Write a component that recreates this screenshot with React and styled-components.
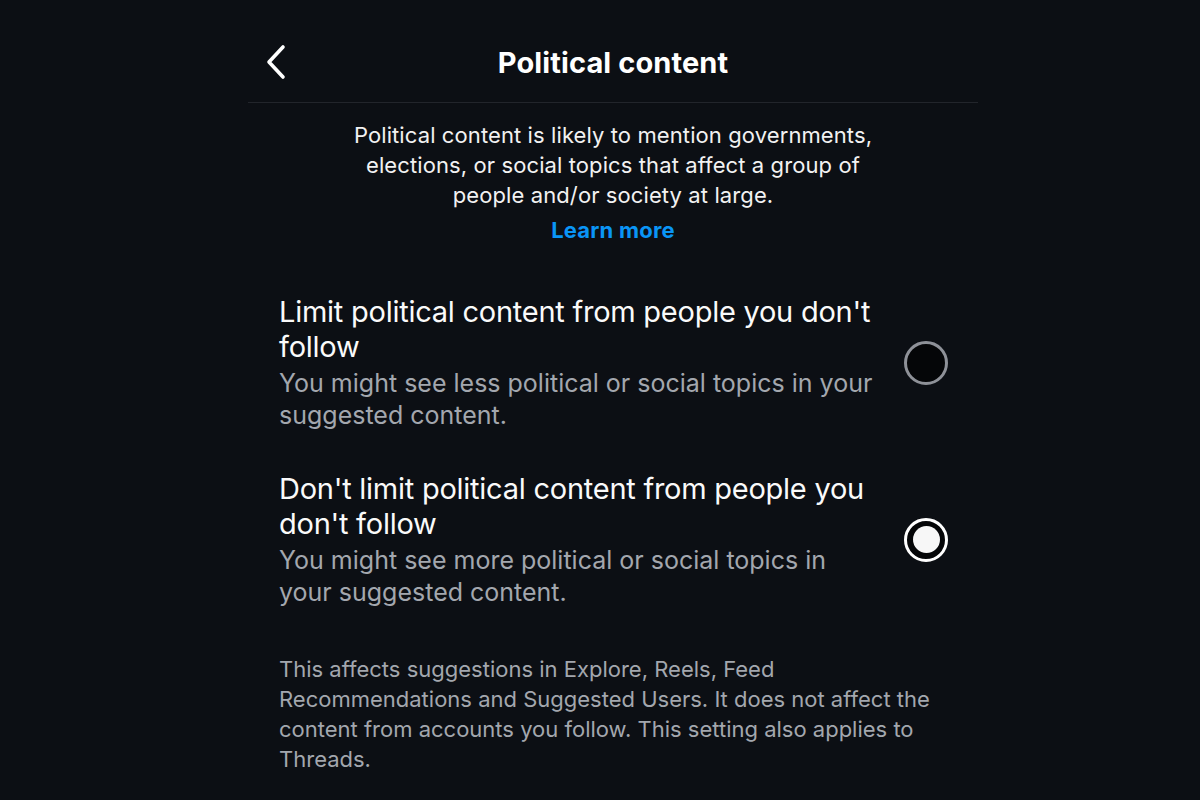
import React, { useState } from 'react'
import styled, { createGlobalStyle } from 'styled-components'

const Global = createGlobalStyle`
  html, body {
    margin: 0;
    padding: 0;
    background: #0c0f14;
  }
  body {
    font-family: Inter, "Noto Sans", sans-serif;
    color: #f5f5f5;
  }
`

const Page = styled.div`
  width: 1200px;
  height: 800px;
  overflow: hidden;
  display: flex;
  justify-content: center;
  background: #0c0f14;
`

const Column = styled.div`
  width: 730px;
  margin-left: 26px;
  display: flex;
  flex-direction: column;
`

const Header = styled.div`
  height: 103px;
  padding-top: 22px;
  display: flex;
  align-items: center;
  border-bottom: 1px solid #22252b;
  box-sizing: border-box;
`

const Back = styled.button`
  background: none;
  border: 0;
  padding: 0;
  margin-left: 12px;
  width: 32px;
  height: 40px;
  display: flex;
  align-items: center;
  justify-content: center;
  cursor: pointer;
`

const Title = styled.h1`
  flex: 1;
  margin: 0 0 0 -44px;
  text-align: center;
  font-size: 29px;
  font-weight: 700;
  letter-spacing: 0.1px;
  color: #fff;
`

const Intro = styled.div`
  width: 540px;
  align-self: center;
  padding-top: 17px;
  text-align: center;
`

const IntroText = styled.p`
  margin: 0;
  font-size: 22px;
  line-height: 30px;
  letter-spacing: 0.1px;
  color: #f2f2f2;
`

const Learn = styled.a`
  display: inline-block;
  margin-top: 7px;
  font-size: 22px;
  font-weight: 700;
  letter-spacing: 0.2px;
  color: #0a95f6;
  text-decoration: none;
`

const Options = styled.div`
  padding: 51px 30px 0 31px;
  display: flex;
  flex-direction: column;
  gap: 40px;
`

const Option = styled.label`
  display: flex;
  align-items: center;
  cursor: pointer;
`

const OptionText = styled.div`
  flex: 1;
  padding-right: 24px;
`

const OptionTitle = styled.div`
  font-size: 29px;
  line-height: 35px;
  color: #fafafa;
  letter-spacing: -0.25px;
`

const OptionSub = styled.div`
  margin-top: 3px;
  font-size: 25px;
  line-height: 32px;
  color: #a3a7ae;
`

const Radio = styled.span`
  width: 44px;
  height: 44px;
  flex: none;
  box-sizing: border-box;
  border-radius: 50%;
  border: 3px solid ${p => (p.$on ? '#ffffff' : '#8e9198')};
  background: #050608;
  display: flex;
  align-items: center;
  justify-content: center;
  &::after {
    content: '';
    width: 27px;
    height: 27px;
    border-radius: 50%;
    background: #f7f7f7;
    display: ${p => (p.$on ? 'block' : 'none')};
  }
`

const Note = styled.p`
  margin: 46px 30px 0 31px;
  font-size: 22px;
  line-height: 30px;
  color: #a3a7ae;
`

const options = [
  {
    title: "Limit political content from people you don't follow",
    sub: 'You might see less political or social topics in your suggested content.'
  },
  {
    title: "Don't limit political content from people you don't follow",
    sub: 'You might see more political or social topics in your suggested content.'
  }
]

export default function App() {
  const [sel, setSel] = useState(1)
  return (
    <Page>
      <Global />
      <Column>
        <Header>
          <Back aria-label="Back">
            <svg width="24" height="36" viewBox="0 0 24 36" fill="none">
              <path d="M19 3 L5 18 L19 33" stroke="#fff" strokeWidth="3.6" strokeLinecap="round" strokeLinejoin="round" />
            </svg>
          </Back>
          <Title>Political content</Title>
        </Header>
        <Intro>
          <IntroText>
            Political content is likely to mention governments, elections, or social topics that affect a group of people and/or society at large.
          </IntroText>
          <Learn href="#">Learn more</Learn>
        </Intro>
        <Options>
          {options.map((o, i) => (
            <Option key={i} onClick={() => setSel(i)}>
              <OptionText>
                <OptionTitle>{o.title}</OptionTitle>
                <OptionSub>{o.sub}</OptionSub>
              </OptionText>
              <Radio $on={sel === i} />
            </Option>
          ))}
        </Options>
        <Note>
          This affects suggestions in Explore, Reels, Feed Recommendations and Suggested Users. It does not affect the content from accounts you follow. This setting also applies to Threads.
        </Note>
      </Column>
    </Page>
  )
}
